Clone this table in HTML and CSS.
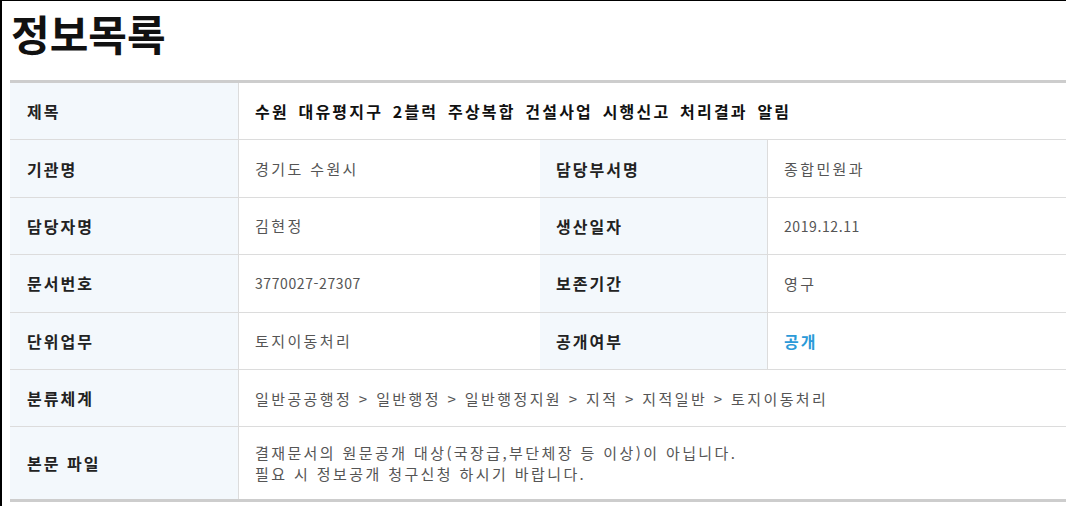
FILE: index.html
```html
<!DOCTYPE html>
<html lang="ko">
<head>
<meta charset="utf-8">
<title>정보목록</title>
<link rel="stylesheet" href="styles.css">
</head>
<body>
<div class="frame">
  <h1 class="title">정보목록</h1>
  <div class="sheet">
    <div class="row row-wide">
      <div class="label">제목</div>
      <div class="value value-strong">수원 대유평지구 2블럭 주상복합 건설사업 시행신고 처리결과 알림</div>
    </div>
    <div class="row">
      <div class="label">기관명</div>
      <div class="value">경기도 수원시</div>
      <div class="label label-2">담당부서명</div>
      <div class="value">종합민원과</div>
    </div>
    <div class="row">
      <div class="label">담당자명</div>
      <div class="value">김현정</div>
      <div class="label label-2">생산일자</div>
      <div class="value value-num">2019.12.11</div>
    </div>
    <div class="row">
      <div class="label">문서번호</div>
      <div class="value value-num">3770027-27307</div>
      <div class="label label-2">보존기간</div>
      <div class="value">영구</div>
    </div>
    <div class="row">
      <div class="label">단위업무</div>
      <div class="value">토지이동처리</div>
      <div class="label label-2">공개여부</div>
      <div class="value value-open">공개</div>
    </div>
    <div class="row row-wide">
      <div class="label">분류체계</div>
      <div class="value">일반공공행정 &gt; 일반행정 &gt; 일반행정지원 &gt; 지적 &gt; 지적일반 &gt; 토지이동처리</div>
    </div>
    <div class="row row-wide row-last">
      <div class="label">본문 파일</div>
      <div class="value value-multi">결재문서의 원문공개 대상(국장급,부단체장 등 이상)이 아닙니다.<br>필요 시 정보공개 청구신청 하시기 바랍니다.</div>
    </div>
  </div>
</div>
</body>
</html>
```

FILE: styles.css
```css
html, body {
  margin: 0;
  padding: 0;
  background: #fff;
}

.frame {
  height: 506px;
  box-sizing: border-box;
  border-top: 1px solid #000;
  border-left: 2px solid #000;
  font-family: "Noto Sans CJK KR", "Noto Sans", "Liberation Sans", sans-serif;
  overflow: hidden;
}

.title {
  margin: 0;
  padding: 2px 0 0 9px;
  height: 79px;
  box-sizing: border-box;
  font-size: 42px;
  line-height: 60px;
  font-weight: 700;
  color: #111;
  letter-spacing: 0;
}

.sheet {
  margin-left: 8px;
  border-top: 3px solid #cdcdcd;
  border-bottom: 3px solid #cdcdcd;
}

.row {
  display: grid;
  grid-template-columns: 229px 301px 228px 1fr;
  height: 57.4px;
  box-sizing: border-box;
  border-bottom: 1px solid #dcdcdc;
}

.row-wide {
  grid-template-columns: 229px 1fr;
}

.row-last {
  height: 72px;
  border-bottom: none;
}

.label {
  display: flex;
  align-items: center;
  padding-left: 17px;
  background: #f3f8fc;
  border-right: 1px solid #dcdcdc;
  font-size: 16px;
  font-weight: 700;
  color: #222;
  letter-spacing: 2px;
}

.label-2 {
  padding-left: 16px;
}

.value {
  display: flex;
  align-items: center;
  padding-left: 16px;
  font-size: 15px;
  color: #555;
  letter-spacing: 2.4px;
}

.value-strong {
  font-size: 16px;
  font-weight: 700;
  color: #111;
  letter-spacing: 2.2px;
  word-spacing: 3px;
}

.value-num {
  font-size: 14px;
  letter-spacing: 0.6px;
}

.value-open {
  font-size: 16px;
  font-weight: 700;
  color: #2b9ad8;
  letter-spacing: 2px;
}

.value-multi {
  line-height: 21px;
}
```
